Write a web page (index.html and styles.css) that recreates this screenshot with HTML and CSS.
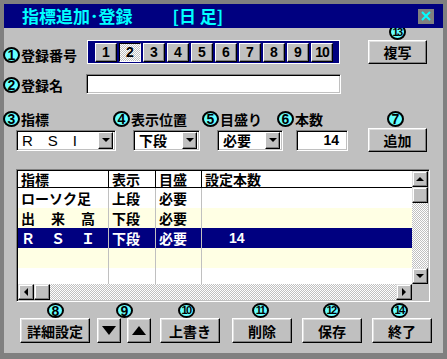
FILE: index.html
```html
<!DOCTYPE html>
<html lang="ja">
<head>
  <meta charset="UTF-8">
  <title>指標追加・登録</title>
  <link rel="stylesheet" href="styles.css">
</head>
<body>
  <div class="window">
    <div class="titlebar">
      <span class="title">指標追加･登録</span>
      <span class="title title-sub">[日 足]</span>
      <span class="close">
        <svg width="16" height="15" viewBox="0 0 16 15"><path d="M4 3 L12 11 M12 3 L4 11" stroke="#00ffff" stroke-width="2"/></svg>
      </span>
    </div>

    <div class="panel">
      <!-- registro -->
      <div class="row row-top">
        <div class="label label-num"><span class="num">1</span>登録番号</div>
        <div class="numbar">
          <button class="nb">1</button>
          <button class="nb nb-on">2</button>
          <button class="nb">3</button>
          <button class="nb">4</button>
          <button class="nb">5</button>
          <button class="nb">6</button>
          <button class="nb">7</button>
          <button class="nb">8</button>
          <button class="nb">9</button>
          <button class="nb nb-10">10</button>
        </div>
        <div class="stack stack-copy">
          <div class="clip"><span class="num num-2">13</span></div>
          <button class="btn btn-side">複写</button>
        </div>
      </div>

      <div class="row row-name">
        <div class="label label-name"><span class="num">2</span>登録名</div>
        <div class="field field-name"></div>
      </div>

      <!-- indicador -->
      <div class="row row-labels">
        <div class="label l-ind"><span class="num">3</span>指標</div>
        <div class="label l-pos"><span class="num">4</span>表示位置</div>
        <div class="label l-scale"><span class="num">5</span>目盛り</div>
        <div class="label l-count"><span class="num">6</span>本数</div>
        <span class="num">7</span>
      </div>

      <div class="row row-controls">
        <div class="field select sel-ind"><span class="sel-text">R　S　I</span><span class="sel-arrow"><i class="tri-down"></i></span></div>
        <div class="field select sel-pos"><span class="sel-text">下段</span><span class="sel-arrow"><i class="tri-down"></i></span></div>
        <div class="field select sel-scale"><span class="sel-text">必要</span><span class="sel-arrow"><i class="tri-down"></i></span></div>
        <div class="field field-count">14</div>
        <button class="btn btn-side btn-add">追加</button>
      </div>

      <!-- tabla -->
      <div class="grid">
        <div class="grid-body">
          <div class="grow grow-head">
            <span class="c c1">指標</span><span class="c c2">表示</span><span class="c c3">目盛</span><span class="c c4">設定本数</span>
          </div>
          <div class="grow">
            <span class="c c1">ローソク足</span><span class="c c2">上段</span><span class="c c3">必要</span><span class="c c4"></span>
          </div>
          <div class="grow grow-alt">
            <span class="c c1 spaced">出　来　高</span><span class="c c2">下段</span><span class="c c3">必要</span><span class="c c4"></span>
          </div>
          <div class="grow grow-sel">
            <span class="c c1 spaced">Ｒ　Ｓ　Ｉ</span><span class="c c2">下段</span><span class="c c3">必要</span><span class="c c4 count">14</span>
          </div>
          <div class="grow grow-alt">
            <span class="c c1"></span><span class="c c2"></span><span class="c c3"></span><span class="c c4"></span>
          </div>
          <div class="grow grow-rest">
            <span class="c c1"></span><span class="c c2"></span><span class="c c3"></span><span class="c c4"></span>
          </div>
        </div>
        <div class="vscroll">
          <span class="sb"><i class="tri-up"></i></span>
          <span class="sb"></span>
          <span class="track"></span>
          <span class="sb"><i class="tri-down"></i></span>
        </div>
        <div class="hscroll">
          <span class="sb"><i class="tri-left"></i></span>
          <span class="sb"></span>
          <span class="track"></span>
          <span class="sb"><i class="tri-right"></i></span>
        </div>
        <div class="corner"></div>
      </div>

      <!-- botones -->
      <div class="row row-badges">
        <span class="num num-sm b8">8</span>
        <span class="num num-sm b9">9</span>
        <span class="num num-sm num-2 b10">10</span>
        <span class="num num-sm num-2 b11">11</span>
        <span class="num num-sm num-2 b12">12</span>
        <span class="num num-sm num-2 b14">14</span>
      </div>

      <div class="row row-buttons">
        <button class="btn bb-detail">詳細設定</button>
        <button class="btn bb-arrow bb-down"><i class="big-down"></i></button>
        <button class="btn bb-arrow bb-up"><i class="big-up"></i></button>
        <button class="btn bb bb-over">上書き</button>
        <button class="btn bb bb-del">削除</button>
        <button class="btn bb bb-save">保存</button>
        <button class="btn bb bb-end">終了</button>
      </div>
    </div>
  </div>
</body>
</html>
```

FILE: styles.css
```css
:root {
  --gris: #c0c0c0;
  --gris-osc: #808080;
  --azul: #000080;
  --cian: #00ffff;
  --crema: #ffffe4;
  --dither: repeating-conic-gradient(#c0c0c0 0 25%, #ffffff 0 50%) 0 0 / 2px 2px;
}

* {
  box-sizing: border-box;
}

body {
  margin: 0;
  font-family: "Noto Sans CJK JP", "Liberation Sans", sans-serif;
  font-weight: 700;
  font-size: 14px;
  color: #000;
}

button {
  font: inherit;
  color: inherit;
  padding: 0;
  margin: 0;
}

.window {
  width: 447px;
  height: 359px;
  background: var(--gris-osc);
  padding: 4px 4px 6px 4px;
  display: flex;
  flex-direction: column;
}

/* barra de titulo */
.titlebar {
  height: 24px;
  background: var(--azul);
  display: flex;
  align-items: center;
  padding: 0 9px 0 18px;
}

.title {
  color: var(--cian);
  font-size: 17px;
  line-height: 24px;
}

.title-sub {
  margin-left: 40px;
}

.close {
  margin-left: auto;
  width: 16px;
  height: 15px;
  background: var(--gris-osc);
  display: flex;
}

.panel {
  flex: 1;
  background: var(--gris);
  display: flex;
  flex-direction: column;
}

.row {
  display: flex;
}

/* insignias con numero */
.num {
  flex: none;
  width: 17px;
  height: 16px;
  border: 2px solid #000;
  border-radius: 50%;
  background: #66ffff;
  display: inline-flex;
  align-items: center;
  justify-content: center;
  font-family: "Liberation Sans", sans-serif;
  font-size: 14px;
  line-height: 1;
}

.num-2 {
  font-size: 11px;
  letter-spacing: -1.5px;
  padding-right: 1px;
}

.num-sm {
  height: 15px;
}

.label {
  display: flex;
  align-items: center;
  height: 16px;
  flex: none;
  white-space: nowrap;
}

.label .num {
  margin-right: 1px;
}

/* biseles */
.btn {
  background: var(--gris);
  border: 1px solid;
  border-color: #fff #000 #000 #fff;
  box-shadow: inset -1px -1px var(--gris-osc), inset 1px 1px #dfdfdf;
  display: flex;
  align-items: center;
  justify-content: center;
}

.field {
  background: #fff;
  border: 1px solid;
  border-color: var(--gris-osc) #fff #fff var(--gris-osc);
  box-shadow: inset 1px 1px #000, inset -1px -1px var(--gris);
  flex: none;
}

/* fila 1 */
.row-top {
  height: 36px;
  align-items: flex-end;
}

.label-num {
  width: 84px;
  margin-left: -1px;
  margin-bottom: 1px;
}

.numbar {
  width: 253px;
  height: 24px;
  background: var(--azul);
  border: 1px solid #fff;
  display: flex;
  gap: 2px;
  padding: 2px 0 0 7px;
}

.nb {
  width: 22px;
  height: 19px;
  background: var(--gris);
  border: 1px solid;
  border-color: #fff #000 #000 #fff;
  box-shadow: inset -1px -1px var(--gris-osc);
  font-family: "Liberation Sans", sans-serif;
  font-size: 14px;
  line-height: 17px;
}

.nb-on {
  background: var(--dither);
  border-color: #000 #fff #fff #000;
  box-shadow: none;
}

.nb-10 {
  letter-spacing: -1px;
}

.stack {
  display: flex;
  flex-direction: column;
  align-items: center;
}

.stack-copy {
  margin-left: 28px;
}

.clip {
  height: 12px;
  overflow: hidden;
  display: flex;
  align-items: flex-end;
}

.btn-side {
  width: 59px;
  height: 24px;
}

/* fila 2 */
.row-name {
  margin-top: 10px;
  height: 20px;
  align-items: flex-end;
}

.label-name {
  width: 83px;
  margin-left: -1px;
  margin-bottom: 1px;
}

.field-name {
  width: 255px;
  height: 20px;
}

/* etiquetas */
.row-labels {
  margin-top: 17px;
  height: 16px;
  align-items: center;
}

.l-ind {
  width: 110px;
  margin-left: -1px;
}

.l-pos {
  width: 89px;
}

.l-scale {
  width: 75px;
}

.l-count {
  width: 110px;
}

/* controles */
.row-controls {
  margin-top: 1px;
  height: 24px;
  align-items: center;
}

.select {
  height: 21px;
  display: flex;
  align-items: center;
  padding: 2px;
}

.sel-text {
  flex: 1;
  padding-left: 3px;
  font-size: 14px;
  line-height: 17px;
  white-space: nowrap;
}

.sel-ind .sel-text {
  font-family: "Liberation Sans", sans-serif;
  font-weight: 400;
  font-size: 15px;
}

.sel-arrow {
  width: 15px;
  height: 17px;
  flex: none;
  background: var(--gris);
  border: 1px solid;
  border-color: #fff #000 #000 #fff;
  box-shadow: inset -1px -1px var(--gris-osc);
  display: flex;
  align-items: center;
  justify-content: center;
}

.sel-ind {
  width: 100px;
  margin-left: 12px;
}

.sel-pos {
  width: 67px;
  margin-left: 17px;
}

.sel-scale {
  width: 66px;
  margin-left: 17px;
}

.field-count {
  width: 52px;
  height: 21px;
  margin-left: 13px;
  text-align: right;
  padding-right: 8px;
  line-height: 19px;
  font-family: "Liberation Sans", sans-serif;
}

.btn-add {
  margin-left: 20px;
}

/* triangulos */
.tri-down,
.tri-up,
.tri-left,
.tri-right,
.big-down,
.big-up {
  width: 0;
  height: 0;
  border-style: solid;
  border-color: transparent;
}

.tri-down {
  border-width: 4px 4px 0 4px;
  border-top-color: #000;
}

.tri-up {
  border-width: 0 4px 4px 4px;
  border-bottom-color: #000;
}

.tri-left {
  border-width: 4px 4px 4px 0;
  border-right-color: #000;
}

.tri-right {
  border-width: 4px 0 4px 4px;
  border-left-color: #000;
}

.big-down {
  border-width: 9px 7px 0 7px;
  border-top-color: #000;
}

.big-up {
  border-width: 0 7px 9px 7px;
  border-bottom-color: #000;
}

/* tabla */
.grid {
  width: 414px;
  height: 133px;
  margin: 17px 0 0 12px;
  border: 1px solid;
  border-color: var(--gris-osc) #fff #fff var(--gris-osc);
  box-shadow: inset 1px 1px #000, inset -1px -1px var(--gris);
  padding: 1px;
  display: grid;
  grid-template-columns: 1fr 16px;
  grid-template-rows: 1fr 16px;
}

.grid-body {
  background: #fff;
  display: flex;
  flex-direction: column;
  min-height: 0;
}

.grow {
  display: flex;
  height: 20px;
  flex: none;
  white-space: nowrap;
}

.grow-head {
  height: 17px;
  border-bottom: 1px solid #000;
}

.grow-alt {
  background: var(--crema);
}

.grow-sel {
  background: var(--azul);
  color: #fff;
}

.grow-rest {
  flex: 1;
}

.c {
  display: block;
  flex: none;
  padding-left: 3px;
  line-height: 20px;
  border-right: 1px solid var(--gris);
}

.grow-head .c {
  line-height: 16px;
  border-right-color: #000;
}

.c1 {
  width: 91px;
}

.c2 {
  width: 47px;
}

.c3 {
  width: 46px;
}

.c4 {
  flex: 1;
  border-right: none;
}

.grow-head .c4 {
  border-right: none;
}

.spaced {
  letter-spacing: 1px;
}

.count {
  padding-left: 27px;
  font-family: "Liberation Sans", sans-serif;
}

.vscroll,
.hscroll {
  display: flex;
  background: var(--dither);
}

.vscroll {
  flex-direction: column;
}

.sb {
  width: 16px;
  height: 16px;
  flex: none;
  background: var(--gris);
  border: 1px solid;
  border-color: #dfdfdf #000 #000 #dfdfdf;
  box-shadow: inset -1px -1px var(--gris-osc), inset 1px 1px #fff;
  display: flex;
  align-items: center;
  justify-content: center;
}

.track {
  flex: 1;
}

.corner {
  background: var(--gris);
}

/* botones inferiores */
.row-badges {
  margin-top: 1px;
  height: 15px;
  align-items: flex-start;
}

.b8 { margin-left: 43px; }
.b9 { margin-left: 52px; }
.b10 { margin-left: 45px; }
.b11 { margin-left: 57px; }
.b12 { margin-left: 54px; }
.b14 { margin-left: 51px; }

.row-buttons {
  height: 25px;
}

.row-buttons .btn {
  height: 25px;
  flex: none;
}

.bb-detail {
  width: 70px;
  margin-left: 16px;
}

.bb-arrow {
  width: 24px;
}

.bb-down {
  margin-left: 7px;
}

.bb-up {
  margin-left: 6px;
}

.bb {
  width: 60px;
  margin-left: 10px;
}

.bb-over {
  margin-left: 9px;
}

.bb-del {
  margin-left: 12px;
}
```
